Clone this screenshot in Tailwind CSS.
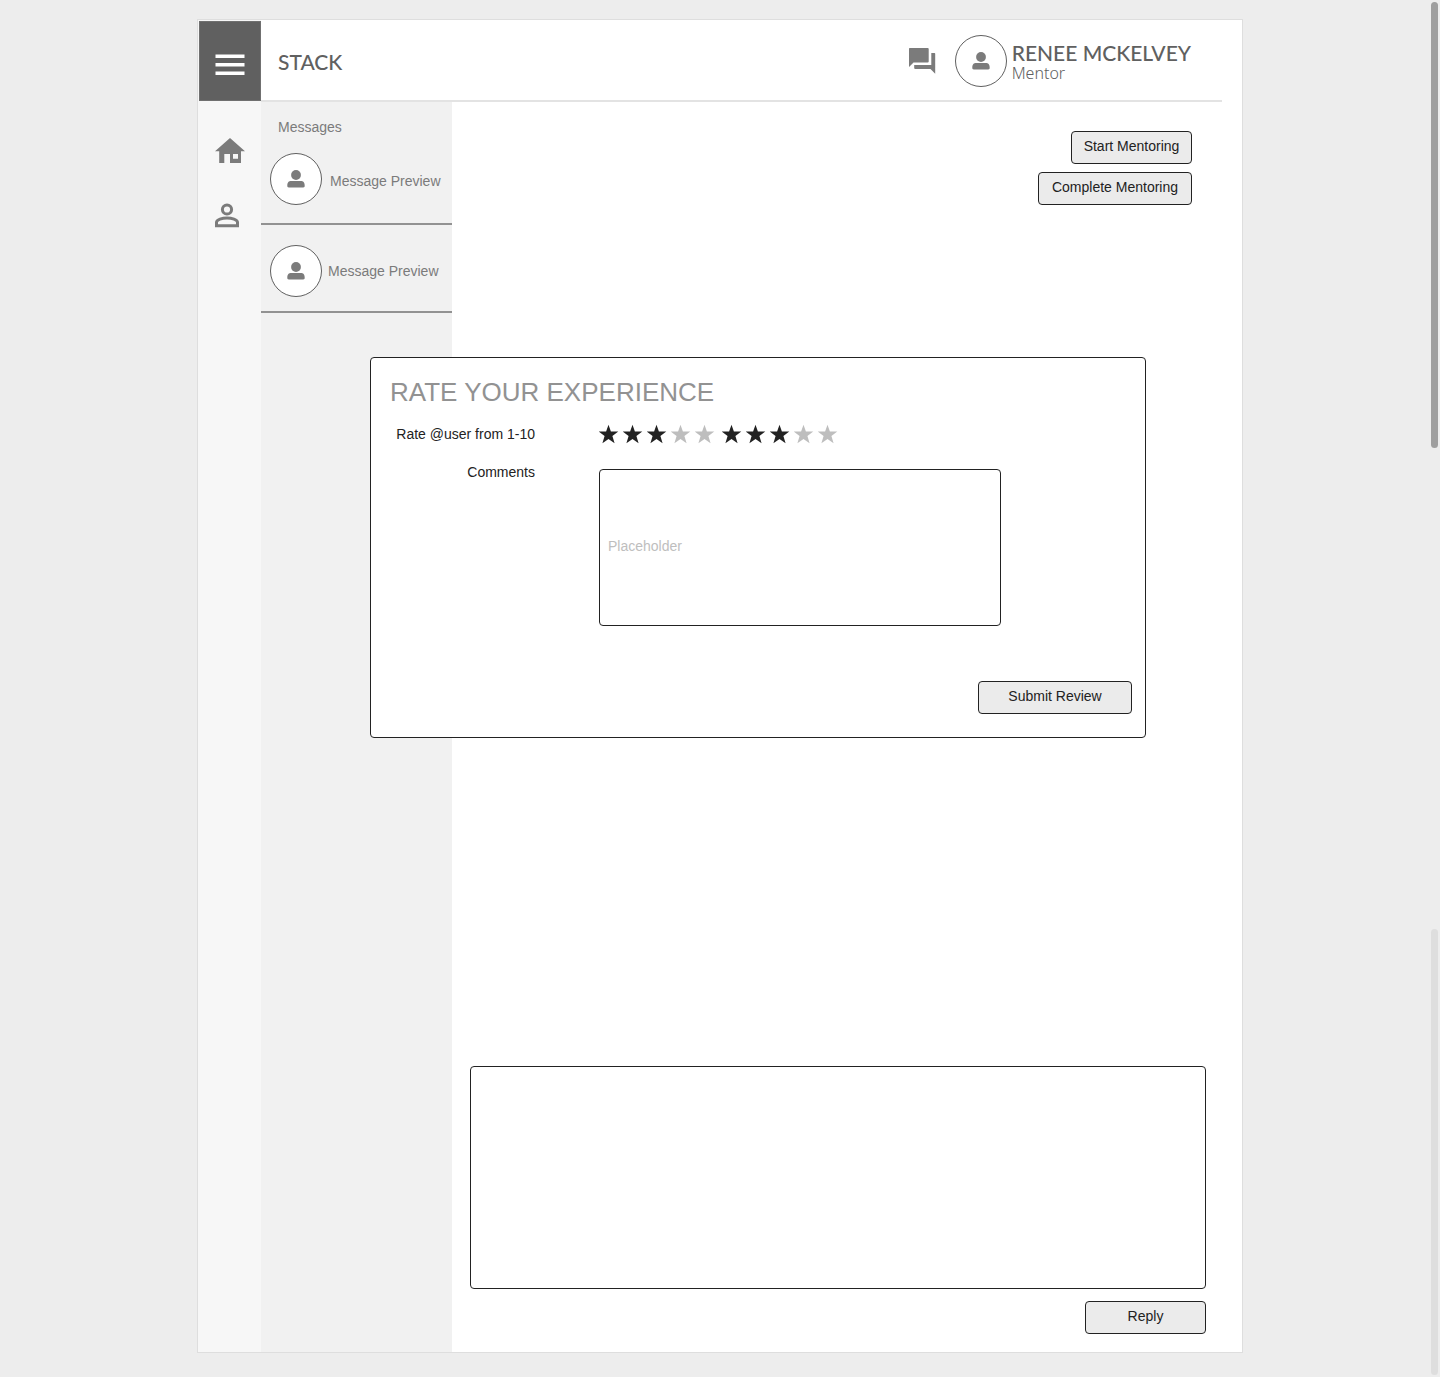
<!DOCTYPE html>
<html lang="en">
<head>
<meta charset="utf-8">
<meta name="viewport" content="width=device-width, initial-scale=1">
<title>Stack</title>
<script src="https://cdn.jsdelivr.net/npm/@tailwindcss/browser@4"></script>
</head>
<body class="relative flex min-h-screen flex-col bg-[#ededed] pt-[19px] pb-6 font-['Liberation_Sans',sans-serif] text-sm leading-5 text-[#222]">
<svg class="hidden" aria-hidden="true">
  <symbol id="star" viewBox="0 0 20 20"><path d="M9.500 .8l2.400 6.700 7.400.1-5.900 4.400 2.200 7.200-6.100-4.200-6.100 4.200 2.200-7.200L-.3 7.600l7.400-.1z"/></symbol>
  <symbol id="user" viewBox="0 0 18 18"><circle cx="9" cy="5" r="4.900"/><path d="M.3 15.800C.3 12 1.800 10.900 4.300 10.900h9.400c2.500 0 4 1.100 4 4.900 0 1.300-.3 1.700-1.500 1.700H1.800c-1.200 0-1.500-.4-1.500-1.700z"/></symbol>
</svg>

<div class="relative mx-auto flex w-full max-w-[1046px] flex-1 border border-[#dedede] bg-white">
  <!-- Icon rail -->
  <nav class="flex w-[63px] shrink-0 flex-col bg-[#f7f7f7] pt-px pl-px">
    <button type="button" aria-label="Menu" class="flex h-20 w-[62px] items-center justify-center border border-[#707070] bg-[#606060] pt-2 text-white">
      <svg width="30" height="22" viewBox="0 0 30 22" fill="currentColor"><path d="M.5 .5h29v3.500H.5zM.5 9h29v3.500H.5zM.5 17.500h29V21H.5z"/></svg>
    </button>
    <a href="#" aria-label="Home" class="mt-[37px] ml-4 text-[#7b7b7b]">
      <svg width="30" height="26" viewBox="0 0 30 26" fill="currentColor"><path fill-rule="evenodd" d="M15 0l15 13.200h-4V25H15v-9H9.300v9H4.200V13.200H0zM18 16v4.800h5V16z"/></svg>
    </a>
    <a href="#" aria-label="Profile" class="mt-[39px] ml-4 text-[#7b7b7b]">
      <svg width="24" height="25" viewBox="0 0 24 25" fill="none" stroke="currentColor" stroke-width="3"><circle cx="12" cy="6.500" r="4.600"/><path d="M1.500 22.700v-3.400c0-2.700 5.800-4.300 10.500-4.300s10.500 1.600 10.500 4.300v3.400z"/></svg>
    </a>
  </nav>

  <div class="flex min-w-0 flex-1 flex-col">
    <header class="mr-5 flex h-[82px] items-center justify-between border-b-2 border-[#e3e3e3] pr-[31px] pl-[17px] text-[#606060]">
      <h1 class="pt-1 font-[Lato,sans-serif] text-[21px] leading-6 font-medium">STACK</h1>
      <div class="flex items-center pt-0.5">
        <button type="button" aria-label="Messages" class="mr-[19px] text-[#7b7b7b]">
          <svg width="27" height="26" viewBox="0 0 27 26" fill="currentColor"><path d="M.7 0h18q1 0 1 1v12.500q0 1-1 1H4.500L0 19V.7Q0 0 .7 0zM22.300 5h3.200q.7 0 .7.7V25.700L21.500 21H6.200q-1 0-1-1V17h17.100z"/></svg>
        </button>
        <span class="flex size-[52px] items-center justify-center rounded-full border border-[#606060] bg-white text-[#7b7b7b]"><svg width="18" height="18" fill="currentColor"><use href="#user"/></svg></span>
        <div class="ml-[5px] pt-1">
          <p class="font-[Lato,sans-serif] text-[21px] leading-5 font-medium">RENEE MCKELVEY</p>
          <p class="font-['Noto_Sans',sans-serif] text-base leading-5 font-light">Mentor</p>
        </div>
      </div>
    </header>

    <div class="flex flex-1">
      <!-- Message list -->
      <aside class="w-[191px] shrink-0 bg-[#f1f1f1] pt-[15px] text-[#7b7b7b]">
        <h2 class="pl-[17px]">Messages</h2>
        <ul>
          <li class="flex items-center gap-2 border-b-2 border-[#929292] pt-4 pb-[18px] pl-[9px]">
            <span class="flex size-[52px] shrink-0 items-center justify-center rounded-full border border-[#606060] bg-white"><svg width="18" height="18" fill="currentColor"><use href="#user"/></svg></span>
            <a href="#" class="pt-1 whitespace-nowrap">Message Preview</a>
          </li>
          <li class="flex items-center gap-[6px] border-b-2 border-[#929292] pt-5 pb-[14px] pl-[9px]">
            <span class="flex size-[52px] shrink-0 items-center justify-center rounded-full border border-[#606060] bg-white"><svg width="18" height="18" fill="currentColor"><use href="#user"/></svg></span>
            <a href="#" class="whitespace-nowrap">Message Preview</a>
          </li>
        </ul>
      </aside>

      <main class="flex flex-1 flex-col items-end pt-[29px] pr-9 pb-[18px] pl-[18px]">
        <div class="mr-[14px] flex flex-col items-end gap-2">
          <button type="button" class="h-[33px] w-[121px] rounded-sm border border-[#222] bg-[#ebebeb] pb-1">Start Mentoring</button>
          <button type="button" class="h-[33px] w-[154px] rounded-sm border border-[#222] bg-[#ebebeb] pb-1">Complete Mentoring</button>
        </div>
        <textarea aria-label="Reply message" class="mt-auto h-[223px] w-full resize-none rounded-sm border border-[#222] p-2"></textarea>
        <button type="button" class="mt-3 h-[33px] w-[121px] rounded-sm border border-[#222] bg-[#ebebeb] pb-1">Reply</button>
      </main>
    </div>
  </div>

  <!-- Rating dialog -->
  <form role="dialog" aria-labelledby="rate-title" class="absolute top-[337px] right-[96px] left-[172px] flex flex-col rounded-sm border border-[#222] bg-white pt-4 pr-[13px] pb-[23px] pl-[19px]">
    <h2 id="rate-title" class="text-[26px] leading-9 text-[#929292]">RATE YOUR EXPERIENCE</h2>
    <div class="mt-3 grid grid-cols-[145px_minmax(0,402px)] gap-x-16 gap-y-4">
      <span id="rate-label" class="pt-0.5 text-right whitespace-nowrap">Rate @user from 1-10</span>
      <div role="radiogroup" aria-labelledby="rate-label" class="flex h-6 items-center text-[#222]">
        <div class="flex gap-1">
          <label class="relative"><input class="sr-only" type="radio" name="score" aria-label="1"><svg class="overflow-visible" width="20" height="20" fill="currentColor"><use href="#star"/></svg></label>
          <label class="relative"><input class="sr-only" type="radio" name="score" aria-label="2"><svg width="20" height="20" fill="currentColor"><use href="#star"/></svg></label>
          <label class="relative"><input class="sr-only" type="radio" name="score" aria-label="3"><svg width="20" height="20" fill="currentColor"><use href="#star"/></svg></label>
          <label class="relative text-[#bebebe]"><input class="sr-only" type="radio" name="score" aria-label="4"><svg width="20" height="20" fill="currentColor"><use href="#star"/></svg></label>
          <label class="relative text-[#bebebe]"><input class="sr-only" type="radio" name="score" aria-label="5"><svg width="20" height="20" fill="currentColor"><use href="#star"/></svg></label>
        </div>
        <div class="ml-[7px] flex gap-1">
          <label class="relative"><input class="sr-only" type="radio" name="score" aria-label="6"><svg width="20" height="20" fill="currentColor"><use href="#star"/></svg></label>
          <label class="relative"><input class="sr-only" type="radio" name="score" aria-label="7"><svg width="20" height="20" fill="currentColor"><use href="#star"/></svg></label>
          <label class="relative"><input class="sr-only" type="radio" name="score" aria-label="8"><svg width="20" height="20" fill="currentColor"><use href="#star"/></svg></label>
          <label class="relative text-[#bebebe]"><input class="sr-only" type="radio" name="score" aria-label="9"><svg width="20" height="20" fill="currentColor"><use href="#star"/></svg></label>
          <label class="relative text-[#bebebe]"><input class="sr-only" type="radio" name="score" aria-label="10"><svg width="20" height="20" fill="currentColor"><use href="#star"/></svg></label>
        </div>
      </div>
      <label for="comments" class="text-right">Comments</label>
      <textarea id="comments" placeholder="Placeholder" class="mt-[7px] h-[157px] w-full resize-none rounded-sm border border-[#222] px-2 pt-[66px] placeholder:text-[#bebebe]"></textarea>
    </div>
    <button type="submit" class="mt-[55px] h-[33px] w-[154px] self-end rounded-sm border border-[#222] bg-[#ebebeb] pb-1">Submit Review</button>
  </form>
</div>

<!-- Scroll bars -->
<div class="absolute inset-y-0.5 right-0.5 flex w-[7px] flex-col justify-between" aria-hidden="true">
  <div class="h-[446px] rounded-full bg-[#9f9f9f]"></div>
  <div class="h-[446px] rounded-full bg-[#dedede]"></div>
</div>
</body>
</html>
